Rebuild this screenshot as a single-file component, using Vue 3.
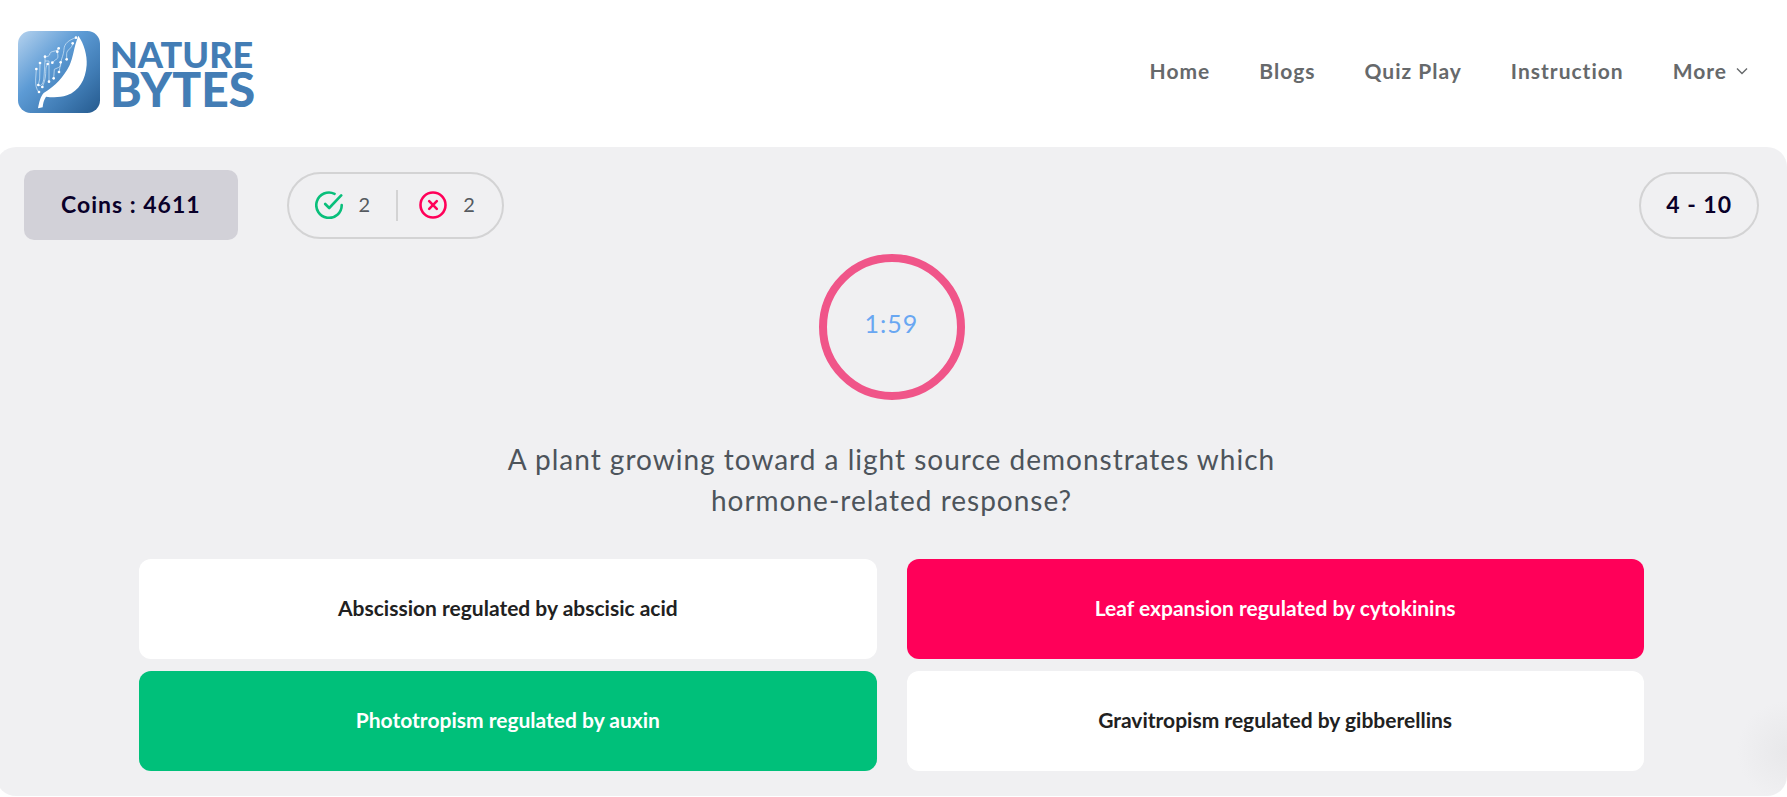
<script setup>
const links = ['Home', 'Blogs', 'Quiz Play', 'Instruction']
const answers = [
  { text: 'Abscission regulated by abscisic acid', state: '' },
  { text: 'Leaf expansion regulated by cytokinins', state: 'wrong' },
  { text: 'Phototropism regulated by auxin', state: 'correct' },
  { text: 'Gravitropism regulated by gibberellins', state: '' },
]
</script>

<template>
  <div class="page">
    <header class="header">
      <a class="logo" href="#" aria-label="Nature Bytes">
        <svg class="mark" viewBox="24 22 246 246" aria-hidden="true">
          <defs>
            <linearGradient id="tile" x1="0" y1="0" x2="1" y2="1">
              <stop offset="0" stop-color="#b5d2ee" />
              <stop offset="0.4" stop-color="#5d9bd5" />
              <stop offset="0.7" stop-color="#417db6" />
              <stop offset="1" stop-color="#255a8e" />
            </linearGradient>
          </defs>
          <rect x="24" y="22" width="246" height="246" rx="38" fill="url(#tile)" />
          <path
            d="M205 36C222 60 232 95 230 124C227 168 207 202 171 215C150 222 128 222 108 219C101 230 99 240 98 251L84 254C87 238 91 219 101 208C137 185 160 161 178 126C190 101 191 72 205 36Z"
            fill="#fff"
          />
          <g fill="none" stroke="#dcebf8" stroke-width="2.4" stroke-opacity="0.85">
            <path d="M198 42C176 49 163 60 162 76C161 90 158 96 152 116" />
            <path d="M188 59C187 74 170 78 170 90V107" />
            <path d="M146 74C140 86 124 80 120 89C119 98 112 99 105 99V112H117V174" />
            <path d="M142 84C144 98 146 104 137 108L127 117" />
            <path d="M152 116C154 132 147 130 133 137L131 164M152 116C150 130 149 136 147 145" />
            <path d="M79 136L77 166C76 184 79 198 87 205M90 118L89 166L85 184" />
            <path d="M105 112L102 160C101 178 94 190 85 184M113 121C103 132 111 150 103 174L97 190" />
          </g>
          <g fill="#fff">
            <circle cx="198" cy="42" r="4" /><circle cx="188" cy="59" r="4" />
            <circle cx="146" cy="74" r="4" /><circle cx="142" cy="84" r="4" />
            <circle cx="105" cy="99" r="4" /><circle cx="170" cy="107" r="4" />
            <circle cx="90" cy="118" r="4" /><circle cx="113" cy="121" r="4" />
            <circle cx="127" cy="117" r="4" /><circle cx="152" cy="116" r="4" />
            <circle cx="79" cy="136" r="4" /><circle cx="147" cy="145" r="4" />
            <circle cx="131" cy="164" r="4" /><circle cx="117" cy="174" r="4" />
            <circle cx="85" cy="184" r="4" /><circle cx="97" cy="190" r="4" />
            <circle cx="87" cy="205" r="4" />
          </g>
        </svg>
        <span class="wordmark">
          <span class="word-top">NATURE</span>
          <span class="word-bottom">BYTES</span>
        </span>
      </a>
      <nav class="nav">
        <a v-for="link in links" :key="link" href="#">{{ link }}</a>
        <button type="button" class="more">
          More
          <svg class="chevron" viewBox="0 0 12 12" aria-hidden="true">
            <path d="M1 3.5L6 8.5L11 3.5" fill="none" stroke="currentColor" stroke-width="1.4" />
          </svg>
        </button>
      </nav>
    </header>

    <main class="panel">
      <div class="status">
        <div class="coins">Coins : 4611</div>
        <div class="score">
          <div class="tally">
            <svg class="icon" viewBox="0 0 28 28" fill="none" stroke="#09bf7b" stroke-width="2.6" stroke-linecap="round" stroke-linejoin="round" role="img" aria-label="Correct">
              <path d="M19.6 2.8A12.7 12.7 0 1 0 26.7 14" />
              <path d="M10.2 13L14.2 17L26.2 4.4" />
            </svg>
            <span class="count">2</span>
          </div>
          <div class="tally">
            <svg class="icon" viewBox="0 0 28 28" fill="none" stroke="#ff0059" stroke-width="2.6" stroke-linecap="round" role="img" aria-label="Wrong">
              <circle cx="14" cy="14" r="12.5" />
              <path d="M10.2 10.2L17.8 17.8M17.8 10.2L10.2 17.8" />
            </svg>
            <span class="count">2</span>
          </div>
        </div>
        <div class="progress">4 - 10</div>
      </div>

      <div class="timer" role="timer">1:59</div>

      <h1 class="question">A plant growing toward a light source demonstrates which hormone-related response?</h1>

      <div class="answers">
        <button v-for="a in answers" :key="a.text" type="button" class="answer" :class="a.state">{{ a.text }}</button>
      </div>
    </main>
  </div>
</template>

<style>
body {
  margin: 0;
  background: #fff;
}
</style>

<style scoped>
.page {
  font-family: Lato, "Open Sans", sans-serif;
  overflow: hidden;
}
.header {
  display: flex;
  align-items: center;
  justify-content: space-between;
  padding: 31px 39px 34px 18px;
}
.logo {
  display: flex;
  align-items: center;
  gap: 10px;
  color: #437db5;
  text-decoration: none;
}
.mark {
  width: 82px;
  height: 82px;
}
.wordmark {
  display: flex;
  flex-direction: column;
  padding-top: 2px;
  font-weight: 900;
}
.word-top {
  font-size: 36px;
  line-height: 32px;
}
.word-bottom {
  font-size: 48px;
  line-height: 38px;
}
.nav {
  display: flex;
  align-items: center;
  gap: 49px;
  padding-bottom: 2px;
}
.nav a,
.more {
  font: bold 21px/24px Lato, "Open Sans", sans-serif;
  letter-spacing: 1px;
  color: #66696b;
  text-decoration: none;
}
.more {
  display: flex;
  align-items: center;
  gap: 9px;
  padding: 0;
  border: 0;
  background: none;
}
.chevron {
  width: 12px;
  height: 12px;
}
.panel {
  margin-left: -4px;
  padding: 23px 0 25px;
  border-radius: 20px;
  background: radial-gradient(circle at right 0 bottom 45px, #e8e8ea 0, #f0f0f2 50px);
}
.status {
  display: flex;
  align-items: center;
  padding: 0 28px;
}
.coins {
  padding: 19px 37px 21px;
  border-radius: 10px;
  background: #d2d1d8;
  color: #090029;
  font-size: 23px;
  font-weight: bold;
  line-height: 30px;
  letter-spacing: 1px;
}
.score {
  display: flex;
  margin-left: 49px;
  padding: 16px 26px;
  border: 2px solid #d3d3d4;
  border-radius: 34px;
}
.tally {
  display: flex;
  align-items: center;
  gap: 16px;
  color: #555a60;
  font-size: 20px;
  line-height: 28px;
  letter-spacing: 1px;
}
.tally + .tally {
  margin-left: 25px;
  padding-left: 21px;
  border-left: 2px solid #d3d3d4;
}
.count {
  padding-bottom: 3px;
}
.icon {
  width: 28px;
  height: 28px;
}
.progress {
  margin-left: auto;
  padding: 15px 25px 17px;
  border: 2px solid #d3d3d4;
  border-radius: 34px;
  color: #090029;
  font-size: 23px;
  font-weight: bold;
  line-height: 31px;
  letter-spacing: 1px;
}
.timer {
  box-sizing: border-box;
  width: 146px;
  height: 146px;
  margin: 14px auto 0;
  border: 8px solid #f05589;
  border-radius: 50%;
  color: #69a7f2;
  font-size: 25px;
  line-height: 123px;
  letter-spacing: 1px;
  text-align: center;
}
.question {
  max-width: 800px;
  margin: 39px auto 38px;
  color: #4d545b;
  font-size: 28px;
  font-weight: normal;
  line-height: 41px;
  letter-spacing: 1px;
  text-align: center;
}
.answers {
  display: grid;
  grid-template-columns: 1fr 1fr;
  gap: 12px 30px;
  padding: 0 8%;
}
.answer {
  height: 100px;
  padding: 0 20px 2px;
  border: 0;
  border-radius: 12px;
  background: #fff;
  color: #212121;
  font: bold 21px/26px Lato, "Open Sans", sans-serif;
}
.wrong {
  background: #ff0059;
  color: #fff;
}
.correct {
  background: #00c07a;
  color: #fff;
}
</style>
